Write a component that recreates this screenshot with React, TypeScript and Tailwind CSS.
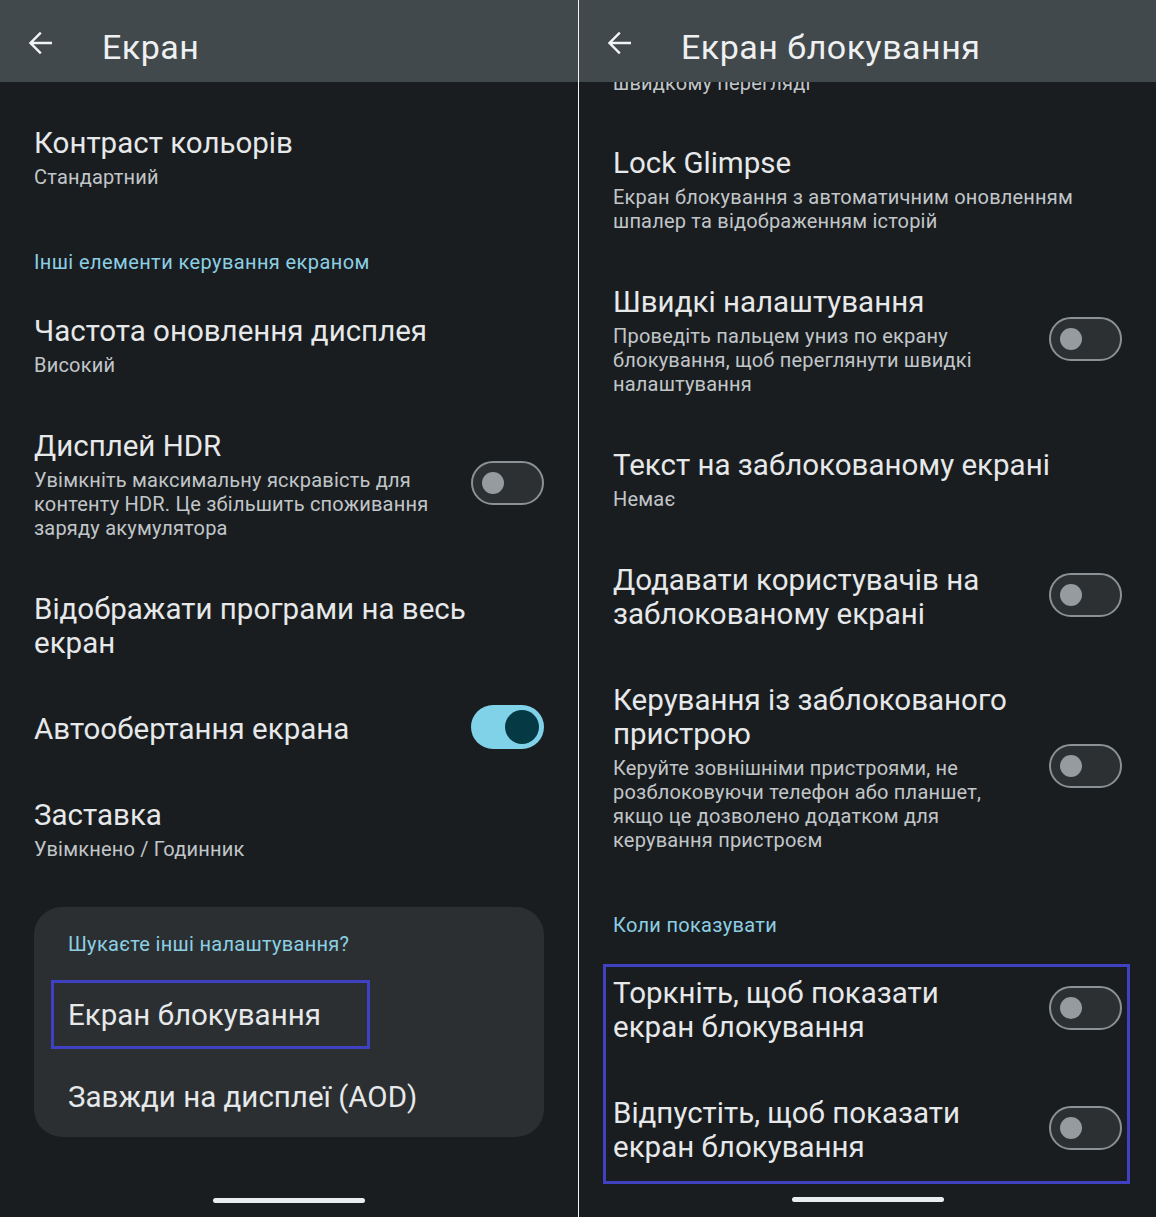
import React from 'react'

type Row = {
  title: string[]
  sub?: string[]
  toggle?: 'on' | 'off'
}

type Block = { kind: 'row'; row: Row } | { kind: 'section'; label: string }

const font = { fontFamily: 'Roboto, "Noto Sans", sans-serif' }

const leftBlocks: Block[] = [
  { kind: 'row', row: { title: ['Контраст кольорів'], sub: ['Стандартний'] } },
  { kind: 'section', label: 'Інші елементи керування екраном' },
  { kind: 'row', row: { title: ['Частота оновлення дисплея'], sub: ['Високий'] } },
  {
    kind: 'row',
    row: {
      title: ['Дисплей HDR'],
      sub: [
        'Увімкніть максимальну яскравість для',
        'контенту HDR. Це збільшить споживання',
        'заряду акумулятора',
      ],
      toggle: 'off',
    },
  },
  { kind: 'row', row: { title: ['Відображати програми на весь', 'екран'] } },
  { kind: 'row', row: { title: ['Автообертання екрана'], toggle: 'on' } },
  { kind: 'row', row: { title: ['Заставка'], sub: ['Увімкнено / Годинник'] } },
]

const rightRows: Row[] = [
  {
    title: ['Lock Glimpse'],
    sub: ['Екран блокування з автоматичним оновленням', 'шпалер та відображенням історій'],
  },
  {
    title: ['Швидкі налаштування'],
    sub: [
      'Проведіть пальцем униз по екрану',
      'блокування, щоб переглянути швидкі',
      'налаштування',
    ],
    toggle: 'off',
  },
  { title: ['Текст на заблокованому екрані'], sub: ['Немає'] },
  { title: ['Додавати користувачів на', 'заблокованому екрані'], toggle: 'off' },
  {
    title: ['Керування із заблокованого', 'пристрою'],
    sub: [
      'Керуйте зовнішніми пристроями, не',
      'розблоковуючи телефон або планшет,',
      'якщо це дозволено додатком для',
      'керування пристроєм',
    ],
    toggle: 'off',
  },
]

const whenRows: Row[] = [
  { title: ['Торкніть, щоб показати', 'екран блокування'], toggle: 'off' },
  { title: ['Відпустіть, щоб показати', 'екран блокування'], toggle: 'off' },
]

function BackArrow() {
  return (
    <svg width="36" height="36" viewBox="0 0 24 24" className="shrink-0">
      <path
        d="M20 11.1H7.6l5.5-5.5L12 4.5 4.5 12l7.5 7.5 1.1-1.1-5.5-5.5H20v-1.8z"
        fill="#f1f3f4"
      />
    </svg>
  )
}

function Toggle({ on }: { on: boolean }) {
  if (on) {
    return (
      <div className="-mb-[3px] -mt-[7px] flex h-[44px] w-[73px] shrink-0 items-center justify-end rounded-full bg-[#80d2e8] pr-[5px]">
        <div className="h-[34px] w-[34px] rounded-full bg-[#053a45]" />
      </div>
    )
  }
  return (
    <div className="-mb-[3px] -mt-[7px] flex h-[44px] w-[73px] shrink-0 items-center rounded-full border-2 border-[#8b9194] bg-[#2c3033] pl-[9px]">
      <div className="h-[22px] w-[22px] rounded-full bg-[#959b9e]" />
    </div>
  )
}

function Lines({ lines, className }: { lines: string[]; className: string }) {
  return (
    <div className={className}>
      {lines.map((l) => (
        <div key={l} className="whitespace-nowrap">
          {l}
        </div>
      ))}
    </div>
  )
}

function SettingRow({ row }: { row: Row }) {
  return (
    <div className="flex items-center justify-between">
      <div>
        <Lines lines={row.title} className="text-[29.5px] leading-[34px] text-[#e6e8e9]" />
        {row.sub && (
          <Lines
            lines={row.sub}
            className="mt-[5px] text-[20px] leading-[24px] tracking-[0.2px] text-[#c1c6c9]"
          />
        )}
      </div>
      {row.toggle && <Toggle on={row.toggle === 'on'} />}
    </div>
  )
}

function Header({ title }: { title: string }) {
  return (
    <div className="relative z-10 flex h-[82px] shrink-0 items-start bg-[#42494c] pl-[22px] pt-[25px]">
      <BackArrow />
      <div className="ml-[44px] text-[34px] leading-[44px] tracking-[0.5px] text-[#eef0f1]">
        {title}
      </div>
    </div>
  )
}

function HomeBar() {
  return <div className="mx-auto h-[5px] w-[152px] rounded-full bg-[#ebeced]" />
}

function DisplayPanel() {
  return (
    <div className="flex h-full w-[578px] shrink-0 flex-col bg-[#1a1d20]">
      <Header title="Екран" />
      <div className="px-[34px] pt-[18px]">
        {leftBlocks.map((b, i) =>
          b.kind === 'section' ? (
            <div
              key={i}
              className="pb-[14px] pt-[35px] text-[20px] leading-[24px] tracking-[0.4px] text-[#8ccfe4]"
            >
              {b.label}
            </div>
          ) : (
            <div key={i} className="py-[26px]">
              <SettingRow row={b.row} />
            </div>
          )
        )}

        <div className="mt-[20px] rounded-[28px] bg-[#2b2f32] px-[34px] pb-[23px] pt-[25px]">
          <div className="text-[20px] leading-[24px] tracking-[0.3px] text-[#8ccfe4]">
            Шукаєте інші налаштування?
          </div>
          <div className="-ml-[17px] mt-[24px] flex h-[69px] w-[319px] items-center border-[3px] border-[#3f41c2] pl-[14px]">
            <div className="text-[29.5px] leading-[34px] text-[#e6e8e9]">Екран блокування</div>
          </div>
          <div className="mt-[31px] text-[29.5px] leading-[34px] text-[#e6e8e9]">
            Завжди на дисплеї (AOD)
          </div>
        </div>
      </div>
      <div className="mt-[61px]">
        <HomeBar />
      </div>
    </div>
  )
}

function LockScreenPanel() {
  return (
    <div className="flex h-full flex-1 flex-col bg-[#1a1d20]">
      <Header title="Екран блокування" />
      <div className="overflow-hidden">
        <div className="px-[34px]">
          {/* tail of the previous row, scrolled under the app bar */}
          <div className="mt-[-11px] pb-[25px] text-[20px] leading-[24px] tracking-[0.2px] text-[#c1c6c9]">
            швидкому перегляді
          </div>
          {rightRows.map((r) => (
            <div key={r.title.join(' ')} className="py-[26px]">
              <SettingRow row={r} />
            </div>
          ))}
          <div className="pb-[27px] pt-[35px] text-[20px] leading-[24px] tracking-[0.3px] text-[#8ccfe4]">
            Коли показувати
          </div>
          <div className="-ml-[10px] -mr-[8px] flex flex-col gap-[52px] border-[3px] border-[#3f41c2] pb-[17px] pl-[7px] pr-[5px] pt-[9px]">
            {whenRows.map((r) => (
              <SettingRow key={r.title.join(' ')} row={r} />
            ))}
          </div>
        </div>
      </div>
      <div className="mt-[13px]">
        <HomeBar />
      </div>
    </div>
  )
}

export default function App() {
  return (
    <div className="flex h-[1217px] w-[1156px] overflow-hidden bg-white" style={font}>
      <DisplayPanel />
      <div className="w-px shrink-0 bg-[#f4f4f4]" />
      <LockScreenPanel />
    </div>
  )
}
